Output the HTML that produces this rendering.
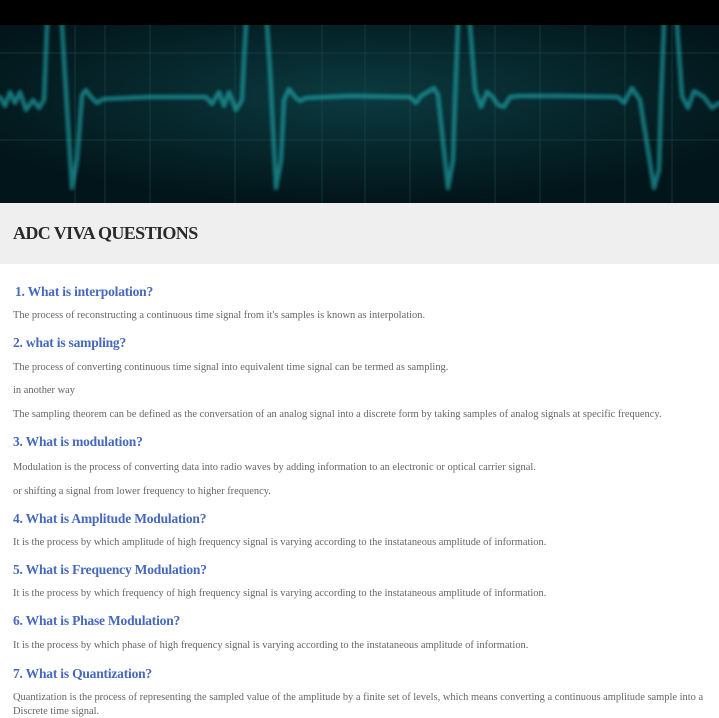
<!DOCTYPE html>
<html><head><meta charset="utf-8"><style>
body{margin:0;width:719px;height:718px;overflow:hidden;background:#fff;position:relative;font-family:"Liberation Serif",serif}
.top{position:absolute;left:0;top:0;width:719px;height:25px;background:#000}
svg{position:absolute;left:0;top:25px}
.band{position:absolute;left:0;top:203px;width:719px;height:61px;background:#efefef}
.band div{position:absolute;left:13px;top:20px;font-size:18px;font-weight:bold;color:#2a2a2a;letter-spacing:-0.6px}
.h,.p{position:absolute;left:13px;white-space:nowrap}
.h{font-size:13.5px;font-weight:bold;color:#4669bd;letter-spacing:-0.2px}
.p{font-size:10.45px;color:#666;letter-spacing:0}
</style></head><body>
<div class="top"></div>
<svg width="719" height="178" viewBox="0 25 719 178">
<defs><radialGradient id="g" cx="50%" cy="40%" r="60%"><stop offset="0" stop-color="#0b3a3f"/><stop offset="1" stop-color="#02151a"/></radialGradient>
<filter id="b"><feGaussianBlur stdDeviation="1.5"/></filter></defs>
<rect x="0" y="25" width="719" height="178" fill="url(#g)"/>
<g stroke="#1d4a4f" stroke-width="1" opacity="0.6">
<line x1="0" y1="53" x2="719" y2="53"/><line x1="0" y1="140" x2="719" y2="140"/>
<line x1="75" y1="25" x2="75" y2="203"/><line x1="105" y1="25" x2="105" y2="203"/><line x1="150" y1="25" x2="150" y2="203"/><line x1="235" y1="25" x2="235" y2="203"/><line x1="322" y1="25" x2="322" y2="203"/><line x1="365" y1="25" x2="365" y2="203"/><line x1="410" y1="25" x2="410" y2="203"/><line x1="495" y1="25" x2="495" y2="203"/><line x1="540" y1="25" x2="540" y2="203"/><line x1="585" y1="25" x2="585" y2="203"/><line x1="625" y1="25" x2="625" y2="203"/><line x1="672" y1="25" x2="672" y2="203"/>
</g>
<g fill="none" stroke-linejoin="round" stroke-linecap="round">
<path id="t" d="M0,97 L5,106 L10,92 L15,103 L20,92 L26,110 L33,100 L39,108 L44,100 L47,25 M62,25 L64,60 L72,188 L77,160 L82,95 L86,90 L91,97 L97,103 L103,99 L150,97 L206,97 L212,104 L219,92 L224,106 L229,92 L236,110 L242,100 L244,60 L246,25 M267,25 L270,70 L276,188 L281,160 L284,100 L289,89 L295,97 L300,101 L306,98 L350,96 L410,97 L416,103 L421,96 L434,88 L438,95 L448,188 L453,160 L455,100 L458,25 M470,25 L475,90 L481,107 L487,92 L492,96 L498,105 L504,107 L510,97 L520,96 L560,96 L618,97 L624,103 L632,88 L640,100 L654,188 L659,170 L661,100 L664,25 M677,25 L682,96 L688,108 L694,91 L704,97 L712,108 L719,103" stroke="#26c3c6" stroke-width="4" opacity="0.35" filter="url(#b)"/>
<use href="#t" stroke="#3fd9d6" stroke-width="2" opacity="0.9" filter="none"/>
</g>
</svg>
<div class="band"><div>ADC VIVA QUESTIONS</div></div>
<div class="h" style="top:284px;left:15px">1. What is interpolation?</div>
<div class="p" style="top:310px">The process of reconstructing a continuous time signal from it's samples is known as interpolation.</div>
<div class="h" style="top:335px">2. what is sampling?</div>
<div class="p" style="top:362px">The process of converting continuous time signal into equivalent time signal can be termed as sampling.</div>
<div class="p" style="top:385px">in another way</div>
<div class="p" style="top:409px">The sampling theorem can be defined as the conversation of an analog signal into a discrete form by taking samples of analog signals at specific frequency.</div>
<div class="h" style="top:434px">3. What is modulation?</div>
<div class="p" style="top:462px">Modulation is the process of converting data into radio waves by adding information to an electronic or optical carrier signal.</div>
<div class="p" style="top:486px">or shifting a signal from lower frequency to higher frequency.</div>
<div class="h" style="top:511px">4. What is Amplitude Modulation?</div>
<div class="p" style="top:537px">It is the process by which amplitude of high frequency signal is varying according to the instataneous amplitude of information.</div>
<div class="h" style="top:562px">5. What is Frequency Modulation?</div>
<div class="p" style="top:588px">It is the process by which frequency of high frequency signal is varying according to the instataneous amplitude of information.</div>
<div class="h" style="top:613px">6. What is Phase Modulation?</div>
<div class="p" style="top:640px">It is the process by which phase of high frequency signal is varying according to the instataneous amplitude of information.</div>
<div class="h" style="top:666px">7. What is Quantization?</div>
<div class="p" style="top:692px">Quantization is the process of representing the sampled value of the amplitude by a finite set of levels, which means converting a continuous amplitude sample into a</div>
<div class="p" style="top:706px">Discrete time signal.</div>
</body></html>
